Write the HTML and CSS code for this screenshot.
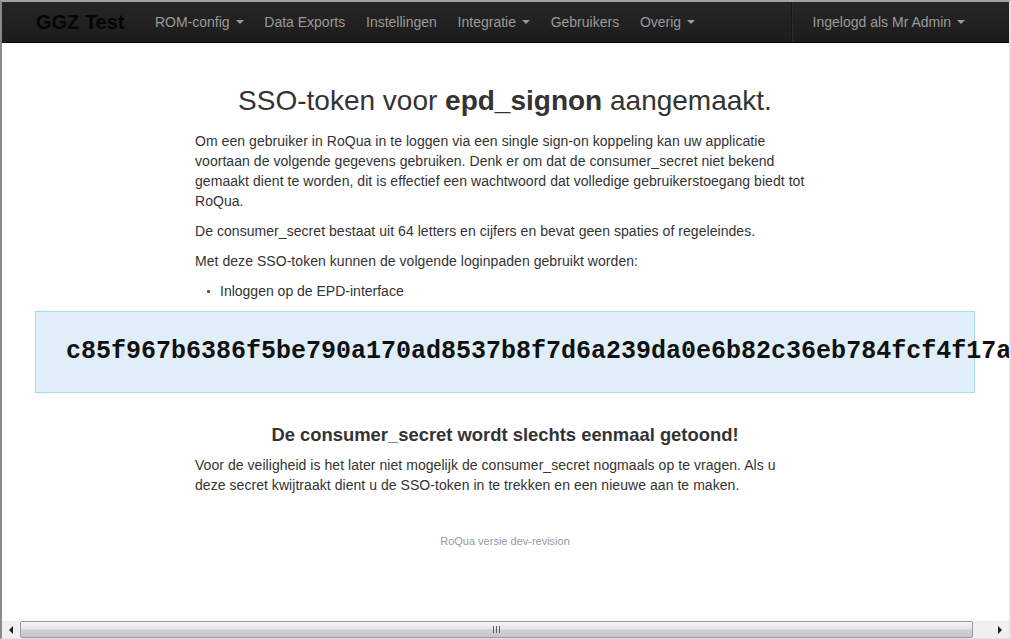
FILE: index.html
```html
<!DOCTYPE html>
<html lang="nl">
<head>
<meta charset="utf-8">
<title>SSO-token aangemaakt</title>
<link rel="stylesheet" href="styles.css">
</head>
<body>
<div class="window">
  <header class="navbar">
    <div class="nav-container">
      <a class="brand" href="#">GGZ Test</a>
      <ul class="nav">
        <li><a href="#">ROM-config <b class="caret"></b></a></li>
        <li><a href="#">Data Exports</a></li>
        <li><a href="#">Instellingen</a></li>
        <li><a href="#">Integratie <b class="caret"></b></a></li>
        <li><a href="#">Gebruikers</a></li>
        <li><a href="#">Overig <b class="caret"></b></a></li>
      </ul>
      <ul class="nav nav-right">
        <li class="divider-vertical"></li>
        <li><a href="#">Ingelogd als Mr Admin <b class="caret"></b></a></li>
      </ul>
    </div>
  </header>

  <main class="viewport">
    <div class="container">
      <div class="column">
        <h1>SSO-token voor <strong>epd_signon</strong> aangemaakt.</h1>
        <p>Om een gebruiker in RoQua in te loggen via een single sign-on koppeling kan uw applicatie voortaan de volgende gegevens gebruiken. Denk er om dat de consumer_secret niet bekend gemaakt dient te worden, dit is effectief een wachtwoord dat volledige gebruikerstoegang biedt tot RoQua.</p>
        <p>De consumer_secret bestaat uit 64 letters en cijfers en bevat geen spaties of regeleindes.</p>
        <p>Met deze SSO-token kunnen de volgende loginpaden gebruikt worden:</p>
        <ul class="paths">
          <li>Inloggen op de EPD-interface</li>
        </ul>
      </div>

      <div class="token-box">
        <code class="token">c85f967b6386f5be790a170ad8537b8f7d6a239da0e6b82c36eb784fcf4f17a1</code>
      </div>

      <div class="column">
        <h3>De consumer_secret wordt slechts eenmaal getoond!</h3>
        <p class="notice">Voor de veiligheid is het later niet mogelijk de consumer_secret nogmaals op te vragen. Als u deze secret kwijtraakt dient u de SSO-token in te trekken en een nieuwe aan te maken.</p>
      </div>

      <footer class="footer">RoQua versie dev-revision</footer>
    </div>
  </main>

  <div class="hscroll">
    <div class="sb-btn"><span class="arrow-left"></span></div>
    <div class="sb-thumb"><span class="grip"></span></div>
    <div class="sb-track"></div>
    <div class="sb-btn"><span class="arrow-right"></span></div>
  </div>
</div>
</body>
</html>
```

FILE: styles.css
```css
html, body {
  margin: 0;
  padding: 0;
  width: 1011px;
  height: 639px;
  overflow: hidden;
  background: #ffffff;
}

body {
  font-family: "Liberation Sans", Arial, Helvetica, sans-serif;
  font-size: 14px;
  line-height: 20px;
  color: #333333;
}

.window {
  width: 1011px;
  height: 639px;
  box-sizing: border-box;
  border-left: 2px solid #8a8a8a;
  border-top: 2px solid #a4a4a4;
  border-right: 2px solid #e2e2e2;
  border-bottom: 1px solid #e4e4e4;
  display: flex;
  flex-direction: column;
  overflow: hidden;
}

/* ---------- navbar ---------- */
.navbar {
  flex: none;
  height: 40px;
  padding-right: 1px;
  background: linear-gradient(#262626, #1c1c1c);
  border-bottom: 1px solid #050505;
}

.nav-container {
  width: 940px;
  margin: 0 auto;
  display: flex;
  align-items: stretch;
  height: 40px;
}

.brand {
  display: block;
  padding: 10px 20px 10px 0;
  margin-left: 1px;
  font-size: 20px;
  font-weight: bold;
  line-height: 20px;
  color: #050505;
  text-decoration: none;
}

.nav {
  list-style: none;
  margin: 0;
  padding: 0;
  display: flex;
  align-items: stretch;
}

.nav a {
  display: block;
  padding: 10px 10.4px;
  line-height: 20px;
  color: #9a9a9a;
  text-decoration: none;
}

.nav-right {
  margin-left: auto;
}

.nav-right a {
  padding-right: 10px;
}

.divider-vertical {
  width: 0;
  height: 40px;
  margin: 0 9px 0 9px;
  border-left: 1px solid #151515;
  border-right: 1px solid #2d2d2d;
}

.caret {
  display: inline-block;
  width: 0;
  height: 0;
  vertical-align: top;
  margin-top: 8px;
  margin-left: 2px;
  border-top: 4px solid #9a9a9a;
  border-left: 4px solid transparent;
  border-right: 4px solid transparent;
}

/* ---------- content ---------- */
.viewport {
  flex: 1;
  overflow: hidden;
  padding-right: 1px;
  background: #ffffff;
}

.container {
  width: 940px;
  margin: 0 auto;
  padding-top: 28px;
}

.column {
  width: 620px;
  margin-left: 160px;
}

h1 {
  margin: 10px 0;
  font-size: 28px;
  line-height: 40px;
  font-weight: normal;
  text-align: center;
  color: #333333;
}

h1 strong {
  font-weight: bold;
}

p {
  margin: 0 0 10px;
  letter-spacing: 0.05px;
}

.notice {
  width: 596px;
}

.paths {
  margin: 0 0 10px 0;
  padding-left: 25px;
  list-style: none;
}

.paths li {
  position: relative;
}

.paths li::before {
  content: "";
  position: absolute;
  left: -13px;
  top: 9px;
  width: 3px;
  height: 3px;
  border-radius: 1px;
  background: #555555;
}

.token-box {
  background: #dfeef7;
  border: 1px solid #a6dcec;
  padding: 20px 30px;
  margin-bottom: 27px;
  white-space: nowrap;
}

.token {
  font-family: "Liberation Mono", "Courier New", monospace;
  font-size: 25px;
  font-weight: bold;
  line-height: 40px;
  color: #111111;
}

h3 {
  margin: 0 0 5px;
  font-size: 18.4px;
  line-height: 30px;
  font-weight: bold;
  text-align: center;
  color: #333333;
}

.footer {
  margin-top: 36px;
  text-align: center;
  font-size: 11px;
  line-height: 20px;
  color: #999999;
}

/* ---------- fake horizontal scrollbar ---------- */
.hscroll {
  flex: none;
  height: 17px;
  display: flex;
  background: #f0f0f0;
  border-top: 1px solid #f8f8f8;
}

.sb-btn {
  width: 18px;
  display: flex;
  align-items: center;
  justify-content: center;
  background: #f0f0f0;
}

.arrow-left {
  width: 0;
  height: 0;
  border-top: 4px solid transparent;
  border-bottom: 4px solid transparent;
  border-right: 4px solid #202020;
}

.arrow-right {
  width: 0;
  height: 0;
  border-top: 4px solid transparent;
  border-bottom: 4px solid transparent;
  border-left: 4px solid #202020;
}

.sb-thumb {
  width: 953px;
  box-sizing: border-box;
  border: 1px solid #9a9a9a;
  border-radius: 2px;
  background: linear-gradient(#f4f4f6 0%, #e6e6ea 45%, #cfcfd4 55%, #c6c6cc 100%);
  display: flex;
  align-items: center;
  justify-content: center;
}

.grip {
  width: 7px;
  height: 7px;
  background: repeating-linear-gradient(90deg, #606060 0 1px, transparent 1px 3px);
}

.sb-track {
  flex: 1;
  background: #efefef;
}
```
